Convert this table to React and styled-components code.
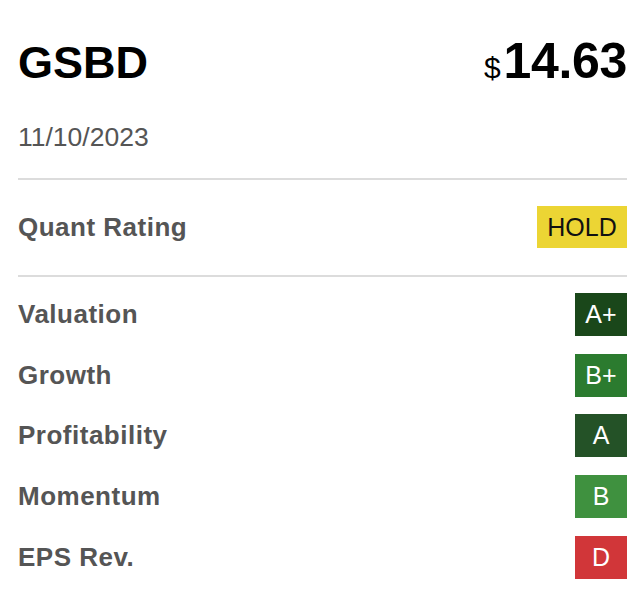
import React from 'react';
import styled, { createGlobalStyle } from 'styled-components';

const Global = createGlobalStyle`
  html, body {
    margin: 0;
    padding: 0;
    background: #fff;
  }
  body, * {
    font-family: 'Liberation Sans', Arial, sans-serif;
    box-sizing: border-box;
  }
`;

const Card = styled.div`
  width: 640px;
  padding: 36px 13px 0 18px;
  display: flex;
  flex-direction: column;
`;

const Header = styled.div`
  display: flex;
  justify-content: space-between;
  align-items: baseline;
  line-height: 1;
`;

const Ticker = styled.h1`
  margin: 0;
  font-size: 45px;
  font-weight: 700;
  color: #000;
  line-height: 1;
`;

const Price = styled.div`
  font-size: 50px;
  font-weight: 700;
  color: #000;
  line-height: 1;
  letter-spacing: -0.3px;
`;

const Dollar = styled.span`
  font-size: 30px;
  font-weight: 400;
  margin-right: 3px;
`;

const DateLine = styled.div`
  margin-top: 38px;
  font-size: 26.5px;
  line-height: 1;
  color: #555;
`;

const Divider = styled.hr`
  margin: 0;
  border: 0;
  border-top: 2px solid #dcdcdc;
  margin-top: ${p => p.gap || 0}px;
`;

const QuantRow = styled.div`
  height: 95px;
  display: flex;
  justify-content: space-between;
  align-items: center;
`;

const Label = styled.div`
  font-size: 26px;
  font-weight: 700;
  color: #555;
  letter-spacing: 0.5px;
`;

const HoldBadge = styled.div`
  width: 90px;
  height: 42px;
  background: #ecd534;
  color: #111;
  font-size: 25px;
  display: flex;
  align-items: center;
  justify-content: center;
`;

const List = styled.div`
  padding-top: 8px;
  display: flex;
  flex-direction: column;
`;

const Row = styled.div`
  height: 60.6px;
  display: flex;
  justify-content: space-between;
  align-items: center;
`;

const Grade = styled.div`
  width: 52px;
  height: 43px;
  background: ${p => p.bg};
  color: #fff;
  font-size: 25px;
  display: flex;
  align-items: center;
  justify-content: center;
`;

const grades = [
  { name: 'Valuation', grade: 'A+', bg: '#1a471a' },
  { name: 'Growth', grade: 'B+', bg: '#2b7b2f' },
  { name: 'Profitability', grade: 'A', bg: '#245227' },
  { name: 'Momentum', grade: 'B', bg: '#3f913f' },
  { name: 'EPS Rev.', grade: 'D', bg: '#d13639' },
];

export default function App() {
  return (
    <Card>
      <Global />
      <Header>
        <Ticker>GSBD</Ticker>
        <Price><Dollar>$</Dollar>14.63</Price>
      </Header>
      <DateLine>11/10/2023</DateLine>
      <Divider gap={27} />
      <QuantRow>
        <Label>Quant Rating</Label>
        <HoldBadge>HOLD</HoldBadge>
      </QuantRow>
      <Divider />
      <List>
        {grades.map(g => (
          <Row key={g.name}>
            <Label>{g.name}</Label>
            <Grade bg={g.bg}>{g.grade}</Grade>
          </Row>
        ))}
      </List>
    </Card>
  );
}
